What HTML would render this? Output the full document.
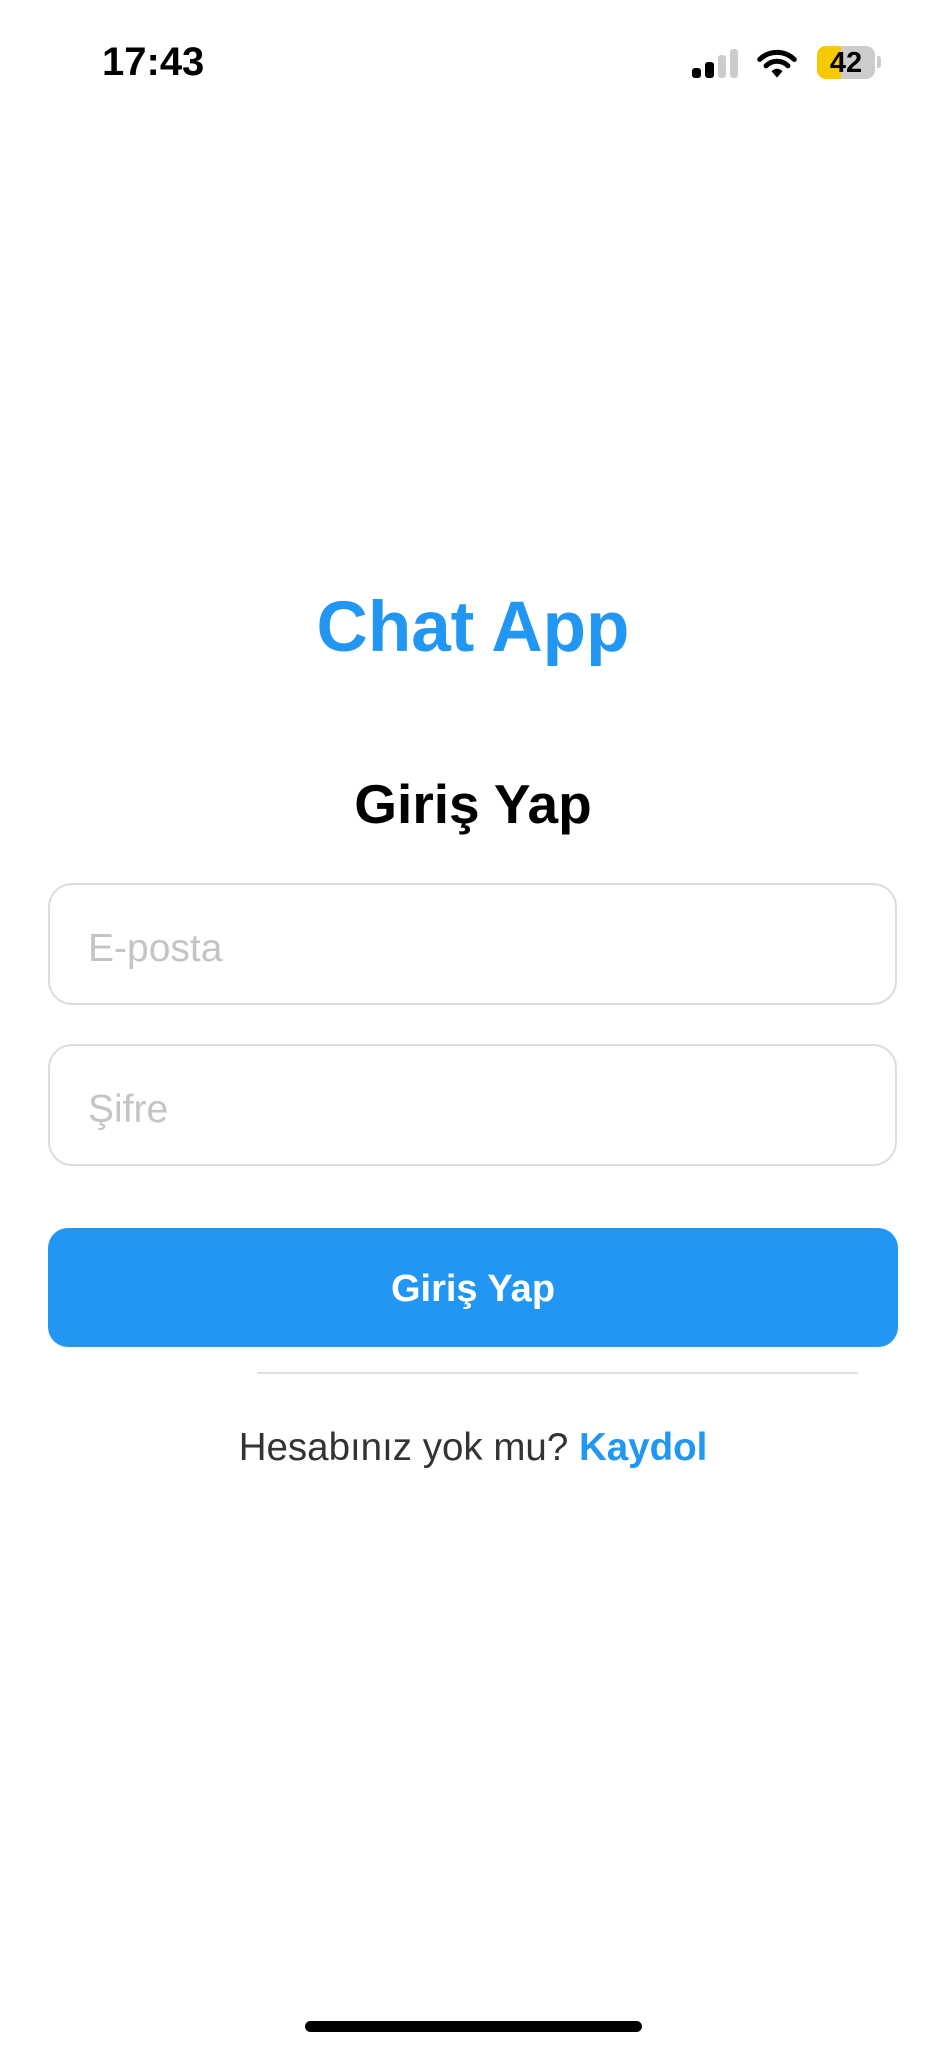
<!DOCTYPE html>
<html><head><meta charset="utf-8"><style>
*{margin:0;padding:0;box-sizing:border-box}
body{width:946px;height:2048px;background:#fff;position:relative;font-family:"Liberation Sans",sans-serif;overflow:hidden}
.a{position:absolute}
.c{left:0;width:946px;text-align:center}
.inp{left:48px;width:849px;height:122px;border:2px solid #ddd;border-radius:24px}
.ph{position:absolute;left:38px;top:42px;font-size:39px;color:#c4c4c4}
</style></head><body>
<div class="a" style="left:102px;top:40px;font-size:40px;font-weight:bold;color:#000">17:43</div>
<svg class="a" style="left:692px;top:49px" width="48" height="30">
<rect x="0" y="19" width="9" height="10" rx="3" fill="#000"/>
<rect x="13" y="13" width="9" height="16" rx="3" fill="#000"/>
<rect x="26" y="6" width="8" height="23" rx="3" fill="#ccc"/>
<rect x="38" y="0" width="8" height="29" rx="3" fill="#ccc"/>
</svg>
<svg class="a" style="left:757px;top:49px" width="40" height="30" viewBox="0 0 44 32">
<path d="M3 11 A27 27 0 0 1 41 11" stroke="#000" stroke-width="5.5" fill="none" stroke-linecap="round"/>
<path d="M10 18 A17 17 0 0 1 34 18" stroke="#000" stroke-width="5.5" fill="none" stroke-linecap="round"/>
<path d="M16 24 L22 31 L28 24 A8 8 0 0 0 16 24Z" fill="#000"/>
</svg>
<div class="a" style="left:817px;top:46px;width:58px;height:33px;border-radius:9px;background:#ccc;overflow:hidden">
<div style="width:24px;height:33px;background:#f7c900"></div>
<div class="a" style="left:0;top:1px;width:58px;text-align:center;font-size:29px;font-weight:bold;color:#000">42</div>
</div>
<div class="a" style="left:877px;top:56px;width:4px;height:12px;border-radius:0 3px 3px 0;background:#ccc"></div>

<div class="a c" style="top:587px;font-size:71px;font-weight:bold;color:#2196f3">Chat App</div>
<div class="a c" style="top:772px;font-size:55px;font-weight:bold;color:#000">Giriş Yap</div>
<div class="a inp" style="top:883px"><div class="ph">E-posta</div></div>
<div class="a inp" style="top:1044px"><div class="ph">Şifre</div></div>
<div class="a" style="left:48px;top:1228px;width:850px;height:119px;border-radius:20px;background:#2196f3"></div>
<div class="a c" style="top:1268px;font-size:38px;font-weight:bold;color:#fff">Giriş Yap</div>
<div class="a" style="left:257px;top:1372px;width:601px;height:2px;background:#e0e0e0"></div>
<div class="a c" style="top:1426px;font-size:38.5px;color:#333">Hesabınız yok mu? <b style="color:#2196f3">Kaydol</b></div>
<div class="a" style="left:305px;top:2021px;width:337px;height:11px;border-radius:6px;background:#000"></div>
</body></html>
